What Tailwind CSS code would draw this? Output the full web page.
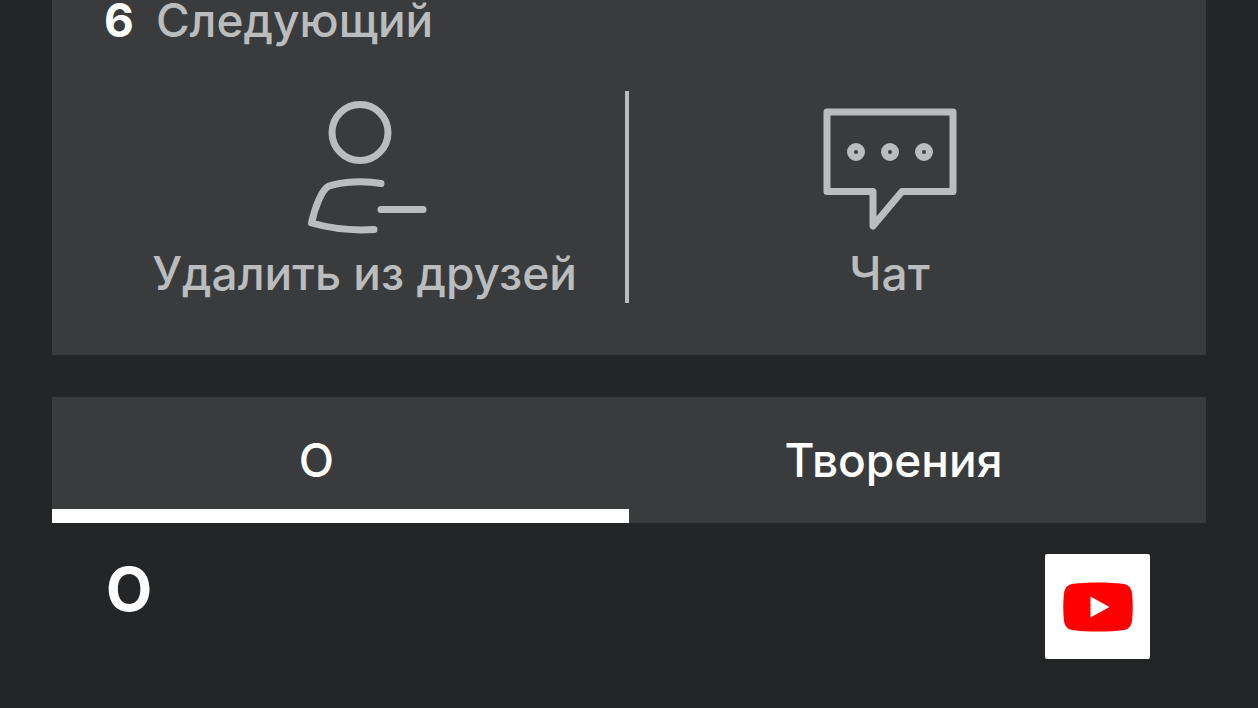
<!DOCTYPE html>
<html lang="ru">
<head>
  <meta charset="UTF-8" />
  <meta name="viewport" content="width=device-width, initial-scale=1.0"/>
  <title>Профиль</title>
  <script src="https://cdn.jsdelivr.net/npm/@tailwindcss/browser@4"></script>
</head>
<body class="min-h-screen bg-[#242527] px-[52px] font-['Inter','Noto_Sans',sans-serif] text-[46px] leading-10 font-medium text-white">

  <!-- Profile card -->
  <section class="bg-[#3a3b3d] pr-14 pb-[52px] pl-[52px] text-[#bbbcbe]">
    <p class="flex gap-[22px]"><span class="font-bold text-white">6</span><span>Следующий</span></p>

    <div class="mt-[51px] flex h-[212px]">
      <button class="flex flex-1 cursor-pointer flex-col items-center whitespace-nowrap">
        <svg class="mt-2 h-[140px] w-[120px] overflow-visible" viewBox="0 0 120 140" fill="none" stroke="currentColor" stroke-width="7" stroke-linecap="round" stroke-linejoin="round">
          <circle cx="55" cy="33.500" r="28"/>
          <path d="M76 84.500C60 81.500 37 82.500 24 87C17 90 10 108 6.500 124C26 129.500 46 132 69 130.500"/>
          <path d="M76 110.500h42"/>
        </svg>
        <span class="mt-3.5">Удалить из друзей</span>
      </button>

      <div class="w-1 bg-[#bbbcbe]"></div>

      <button class="flex flex-1 cursor-pointer flex-col items-center whitespace-nowrap">
        <svg class="mt-2 h-[140px] w-[134px]" viewBox="0 0 134 140" fill="none" stroke="currentColor" stroke-width="7" stroke-linecap="round" stroke-linejoin="round">
          <path d="M4 13h126v79.500H79L50 127V92.500H4z"/>
          <circle cx="33" cy="53" r="5.500"/>
          <circle cx="67" cy="53" r="5.500"/>
          <circle cx="101" cy="53" r="5.500"/>
        </svg>
        <span class="mt-3.5">Чат</span>
      </button>
    </div>
  </section>

  <!-- Tabs -->
  <nav class="mt-[42px] flex h-[126px] bg-[#3a3b3d]">
    <button class="flex-1 cursor-pointer border-b-14 border-white pt-3.5 pr-12">О</button>
    <button class="flex-1 cursor-pointer border-b-14 border-transparent pt-3.5 pr-12">Творения</button>
  </nav>

  <!-- About -->
  <section class="flex items-start justify-between pt-[31px] pr-14 pl-[54px]">
    <h2 class="text-[60px] leading-[70px] font-bold">О</h2>
    <a href="#" aria-label="YouTube" class="flex size-[105px] items-center justify-center rounded-xs bg-white">
      <svg class="h-[50px] w-[70px]" viewBox="0 0 70 50">
        <path fill="#ff0000" d="M9 2C24 0 46 0 61 2C66 3 68 6 69 11C70 20 70 30 69 39C68 44 66 47 61 48C46 50 24 50 9 48C4 47 2 44 1 39C0 30 0 20 1 11C2 6 4 3 9 2z"/>
        <path fill="#ffffff" d="M27.500 14.500v21L46.500 25z"/>
      </svg>
    </a>
  </section>

</body>
</html>
